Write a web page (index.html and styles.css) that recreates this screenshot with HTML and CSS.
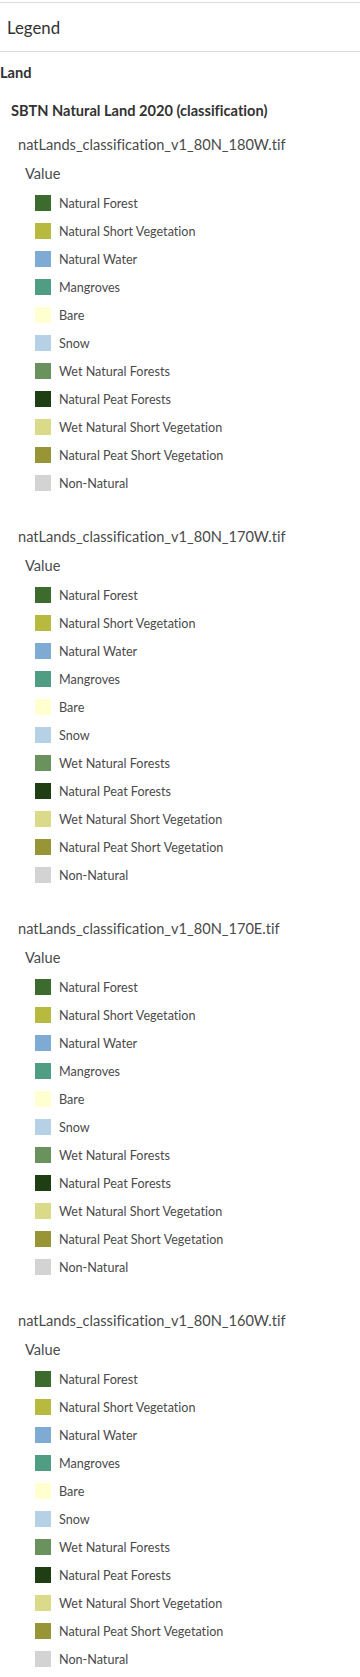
FILE: index.html
```html
<!DOCTYPE html>
<html lang="en">

<head>
    <meta charset="UTF-8">
    <meta name="viewport" content="width=device-width, initial-scale=1.0">
    <title>Legend</title>
    <link rel="stylesheet" href="styles.css">
</head>

<body>
    <div class="panel">
        <!-- Panel header -->
        <div class="panel-header">Legend</div>

        <div class="legend">
            <div class="group-title">Land</div>
            <div class="layer-title">SBTN Natural Land 2020 (classification)</div>

            <!-- 180W -->
            <div class="sublayer">
                <div class="sublayer-title">natLands_classification_v1_80N_180W.tif</div>
                <div class="field-title">Value</div>
                <ul class="items">
                    <li><span class="swatch forest"></span>Natural Forest</li>
                    <li><span class="swatch short-veg"></span>Natural Short Vegetation</li>
                    <li><span class="swatch water"></span>Natural Water</li>
                    <li><span class="swatch mangroves"></span>Mangroves</li>
                    <li><span class="swatch bare"></span>Bare</li>
                    <li><span class="swatch snow"></span>Snow</li>
                    <li><span class="swatch wet-forest"></span>Wet Natural Forests</li>
                    <li><span class="swatch peat-forest"></span>Natural Peat Forests</li>
                    <li><span class="swatch wet-short-veg"></span>Wet Natural Short Vegetation</li>
                    <li><span class="swatch peat-short-veg"></span>Natural Peat Short Vegetation</li>
                    <li><span class="swatch non-natural"></span>Non-Natural</li>
                </ul>
            </div>

            <!-- 170W -->
            <div class="sublayer">
                <div class="sublayer-title">natLands_classification_v1_80N_170W.tif</div>
                <div class="field-title">Value</div>
                <ul class="items">
                    <li><span class="swatch forest"></span>Natural Forest</li>
                    <li><span class="swatch short-veg"></span>Natural Short Vegetation</li>
                    <li><span class="swatch water"></span>Natural Water</li>
                    <li><span class="swatch mangroves"></span>Mangroves</li>
                    <li><span class="swatch bare"></span>Bare</li>
                    <li><span class="swatch snow"></span>Snow</li>
                    <li><span class="swatch wet-forest"></span>Wet Natural Forests</li>
                    <li><span class="swatch peat-forest"></span>Natural Peat Forests</li>
                    <li><span class="swatch wet-short-veg"></span>Wet Natural Short Vegetation</li>
                    <li><span class="swatch peat-short-veg"></span>Natural Peat Short Vegetation</li>
                    <li><span class="swatch non-natural"></span>Non-Natural</li>
                </ul>
            </div>

            <!-- 170E -->
            <div class="sublayer">
                <div class="sublayer-title">natLands_classification_v1_80N_170E.tif</div>
                <div class="field-title">Value</div>
                <ul class="items">
                    <li><span class="swatch forest"></span>Natural Forest</li>
                    <li><span class="swatch short-veg"></span>Natural Short Vegetation</li>
                    <li><span class="swatch water"></span>Natural Water</li>
                    <li><span class="swatch mangroves"></span>Mangroves</li>
                    <li><span class="swatch bare"></span>Bare</li>
                    <li><span class="swatch snow"></span>Snow</li>
                    <li><span class="swatch wet-forest"></span>Wet Natural Forests</li>
                    <li><span class="swatch peat-forest"></span>Natural Peat Forests</li>
                    <li><span class="swatch wet-short-veg"></span>Wet Natural Short Vegetation</li>
                    <li><span class="swatch peat-short-veg"></span>Natural Peat Short Vegetation</li>
                    <li><span class="swatch non-natural"></span>Non-Natural</li>
                </ul>
            </div>

            <!-- 160W -->
            <div class="sublayer">
                <div class="sublayer-title">natLands_classification_v1_80N_160W.tif</div>
                <div class="field-title">Value</div>
                <ul class="items">
                    <li><span class="swatch forest"></span>Natural Forest</li>
                    <li><span class="swatch short-veg"></span>Natural Short Vegetation</li>
                    <li><span class="swatch water"></span>Natural Water</li>
                    <li><span class="swatch mangroves"></span>Mangroves</li>
                    <li><span class="swatch bare"></span>Bare</li>
                    <li><span class="swatch snow"></span>Snow</li>
                    <li><span class="swatch wet-forest"></span>Wet Natural Forests</li>
                    <li><span class="swatch peat-forest"></span>Natural Peat Forests</li>
                    <li><span class="swatch wet-short-veg"></span>Wet Natural Short Vegetation</li>
                    <li><span class="swatch peat-short-veg"></span>Natural Peat Short Vegetation</li>
                    <li><span class="swatch non-natural"></span>Non-Natural</li>
                </ul>
            </div>
        </div>
    </div>
</body>

</html>
```

FILE: styles.css
```css
:root {
    --color-text: #323232;
    --color-text-soft: #4a4a4a;
    --color-border: #dcdcdc;
}

* {
    margin: 0;
    padding: 0;
    box-sizing: border-box;
    font-family: Lato, 'Noto Sans', sans-serif;
    font-variant-ligatures: none;
}

body {
    background-color: white;
    color: var(--color-text);
}

.panel {
    margin-top: 2px;
    border-top: 1px solid var(--color-border);
}

/* Header */
.panel-header {
    height: 49px;
    display: flex;
    align-items: center;
    padding-left: 7px;
    font-size: 16.8px;
    border-bottom: 1px solid var(--color-border);
}

/* Legend body */
.legend {
    padding-top: 6px;
}

.group-title,
.layer-title,
.sublayer-title,
.field-title {
    height: 28px;
    display: flex;
    align-items: center;
    font-size: 14.6px;
}

.group-title {
    font-weight: 700;
}

.layer-title {
    font-weight: 700;
    padding-left: 11px;
    margin-top: 10px;
    margin-bottom: 6px;
}

.sublayer {
    margin-bottom: 25px;
}

.sublayer-title {
    padding-left: 18px;
    color: var(--color-text-soft);
    margin-bottom: 1px;
}

.field-title {
    padding-left: 25px;
    color: var(--color-text-soft);
    margin-bottom: 2px;
}

.items {
    list-style: none;
}

.items li {
    height: 28px;
    display: flex;
    align-items: center;
    padding-left: 35px;
    font-size: 12.6px;
    color: var(--color-text-soft);
}

.swatch {
    width: 16px;
    height: 16px;
    margin-right: 8px;
    flex-shrink: 0;
}

.forest { background-color: #3d6b2e; }
.short-veg { background-color: #b8b93f; }
.water { background-color: #7eaad3; }
.mangroves { background-color: #4f9e83; }
.bare { background-color: #ffffd0; }
.snow { background-color: #b6d0e6; }
.wet-forest { background-color: #6a925c; }
.peat-forest { background-color: #1f3e13; }
.wet-short-veg { background-color: #dada88; }
.peat-short-veg { background-color: #979535; }
.non-natural { background-color: #d3d3d3; }
```
